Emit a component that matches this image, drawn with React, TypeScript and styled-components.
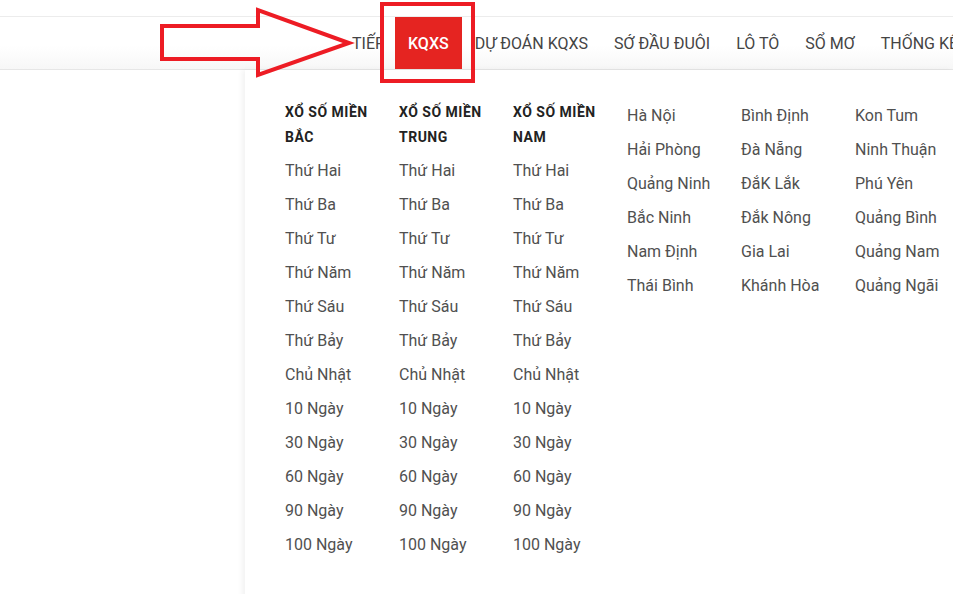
import React from 'react';
import styled, { createGlobalStyle } from 'styled-components';

const GlobalStyle = createGlobalStyle`
  html, body {
    margin: 0;
    padding: 0;
    background: #fff;
    font-family: Roboto, "Liberation Sans", Arial, sans-serif;
    overflow: hidden;
  }
`;

const Page = styled.div`
  position: relative;
  width: 953px;
  height: 594px;
  overflow: hidden;
  background: #fff;
`;

const TopStrip = styled.div`
  height: 16px;
  border-bottom: 1px solid #ececec;
`;

const NavBar = styled.nav`
  display: flex;
  align-items: stretch;
  height: 52px;
  padding-left: 352px;
  white-space: nowrap;
  overflow: hidden;
  background: linear-gradient(#fff 55%, #f7f7f7);
  border-bottom: 1px solid #e6e6e6;
`;

const Clipped = styled.div`
  flex: 0 0 28px;
  margin-right: 15px;
  overflow: hidden;
  display: flex;
  align-items: center;
`;

const NavItem = styled.a<{ $active?: boolean }>`
  flex-shrink: 0;
  display: flex;
  align-items: center;
  padding: 0 13px;
  font-size: 16px;
  font-weight: ${p => (p.$active ? 500 : 400)};
  color: ${p => (p.$active ? '#fff' : '#444')};
  background: ${p => (p.$active ? '#e52421' : 'transparent')};
  text-decoration: none;
  text-transform: uppercase;
`;

const ClippedText = styled.span`
  font-size: 16px;
  color: #444;
`;

const Dropdown = styled.div`
  display: grid;
  grid-template-columns: repeat(6, 114px);
  margin-left: 245px;
  height: 524px;
  padding: 30px 0 0 40px;
  background: #fff;
  box-shadow: -3px 0 5px rgba(0, 0, 0, 0.05);
`;

const Column = styled.div<{ $shift?: number }>`
  display: flex;
  flex-direction: column;
  margin-top: ${p => p.$shift || 0}px;
`;

const Heading = styled.div`
  max-width: 100px;
  margin-bottom: 4px;
  font-size: 14px;
  font-weight: 700;
  line-height: 25px;
  letter-spacing: 0.5px;
  color: #222;
  text-transform: uppercase;
`;

const Item = styled.a`
  font-size: 16px;
  line-height: 34px;
  color: #505050;
  text-decoration: none;
  white-space: nowrap;
`;

const Overlay = styled.svg`
  position: absolute;
  left: 0;
  top: 0;
  pointer-events: none;
`;

const days = [
  'Thứ Hai',
  'Thứ Ba',
  'Thứ Tư',
  'Thứ Năm',
  'Thứ Sáu',
  'Thứ Bảy',
  'Chủ Nhật',
  '10 Ngày',
  '30 Ngày',
  '60 Ngày',
  '90 Ngày',
  '100 Ngày',
];

const regions = ['Xổ số miền Bắc', 'Xổ số miền Trung', 'Xổ số miền Nam'];

const provinces = [
  ['Hà Nội', 'Hải Phòng', 'Quảng Ninh', 'Bắc Ninh', 'Nam Định', 'Thái Bình'],
  ['Bình Định', 'Đà Nẵng', 'ĐắK Lắk', 'Đắk Nông', 'Gia Lai', 'Khánh Hòa'],
  ['Kon Tum', 'Ninh Thuận', 'Phú Yên', 'Quảng Bình', 'Quảng Nam', 'Quảng Ngãi'],
];

const navItems = ['Dự đoán KQXS', 'Sớ đầu đuôi', 'Lô tô', 'Sổ mơ', 'Thống kê'];

export default function App() {
  return (
    <Page>
      <GlobalStyle />
      <TopStrip />
      <NavBar>
        <Clipped>
          <ClippedText>TIẾP</ClippedText>
        </Clipped>
        <NavItem $active>KQXS</NavItem>
        {navItems.map(n => (
          <NavItem key={n}>{n}</NavItem>
        ))}
      </NavBar>
      <Dropdown>
        {regions.map(r => (
          <Column key={r}>
            <Heading>{r}</Heading>
            {days.map(d => (
              <Item key={d}>{d}</Item>
            ))}
          </Column>
        ))}
        {provinces.map((col, i) => (
          <Column key={i} $shift={-1}>
            {col.map(p => (
              <Item key={p}>{p}</Item>
            ))}
          </Column>
        ))}
      </Dropdown>
      {/* annotation: arrow + outline round the active tab */}
      <Overlay width="953" height="100" viewBox="0 0 953 100">
        <polygon
          points="162,26 258,26 258,10 349,43 258,75 258,59 162,59"
          fill="none"
          stroke="#ed1c24"
          strokeWidth="4"
          strokeLinejoin="miter"
        />
        <rect x="382" y="4" width="91" height="77" fill="none" stroke="#ed1c24" strokeWidth="4" />
      </Overlay>
    </Page>
  );
}
